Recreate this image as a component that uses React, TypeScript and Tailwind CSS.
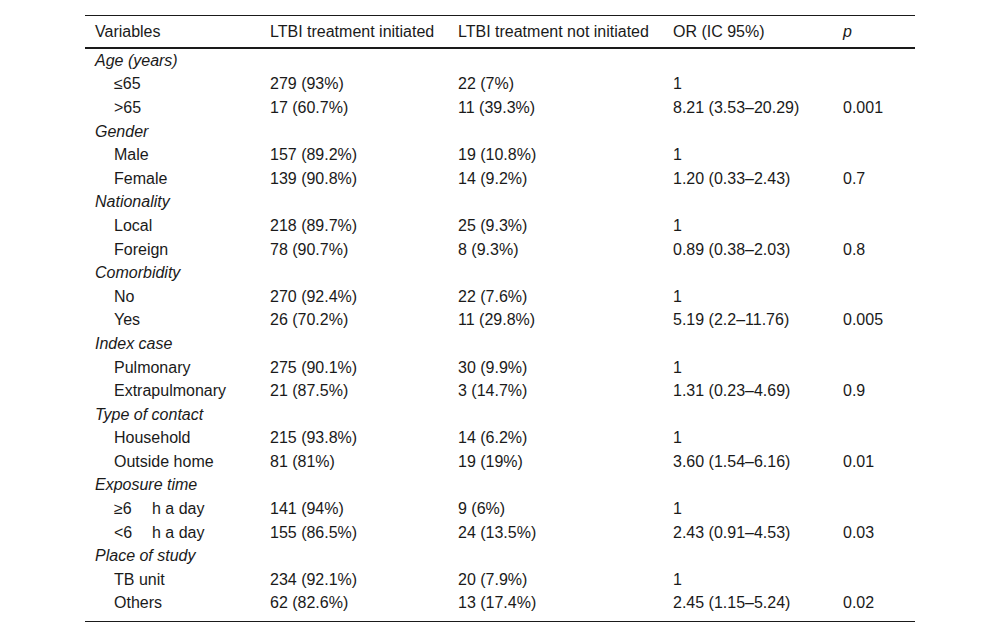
type Row = { label: string; a: string; b: string; or: string; p: string; hours?: boolean };
type Group = { title: string; rows: Row[] };

const groups: Group[] = [
  {
    title: 'Age (years)',
    rows: [
      { label: '≤65', a: '279 (93%)', b: '22 (7%)', or: '1', p: '' },
      { label: '>65', a: '17 (60.7%)', b: '11 (39.3%)', or: '8.21 (3.53–20.29)', p: '0.001' },
    ],
  },
  {
    title: 'Gender',
    rows: [
      { label: 'Male', a: '157 (89.2%)', b: '19 (10.8%)', or: '1', p: '' },
      { label: 'Female', a: '139 (90.8%)', b: '14 (9.2%)', or: '1.20 (0.33–2.43)', p: '0.7' },
    ],
  },
  {
    title: 'Nationality',
    rows: [
      { label: 'Local', a: '218 (89.7%)', b: '25 (9.3%)', or: '1', p: '' },
      { label: 'Foreign', a: '78 (90.7%)', b: '8 (9.3%)', or: '0.89 (0.38–2.03)', p: '0.8' },
    ],
  },
  {
    title: 'Comorbidity',
    rows: [
      { label: 'No', a: '270 (92.4%)', b: '22 (7.6%)', or: '1', p: '' },
      { label: 'Yes', a: '26 (70.2%)', b: '11 (29.8%)', or: '5.19 (2.2–11.76)', p: '0.005' },
    ],
  },
  {
    title: 'Index case',
    rows: [
      { label: 'Pulmonary', a: '275 (90.1%)', b: '30 (9.9%)', or: '1', p: '' },
      { label: 'Extrapulmonary', a: '21 (87.5%)', b: '3 (14.7%)', or: '1.31 (0.23–4.69)', p: '0.9' },
    ],
  },
  {
    title: 'Type of contact',
    rows: [
      { label: 'Household', a: '215 (93.8%)', b: '14 (6.2%)', or: '1', p: '' },
      { label: 'Outside home', a: '81 (81%)', b: '19 (19%)', or: '3.60 (1.54–6.16)', p: '0.01' },
    ],
  },
  {
    title: 'Exposure time',
    rows: [
      { label: '≥6', hours: true, a: '141 (94%)', b: '9 (6%)', or: '1', p: '' },
      { label: '<6', hours: true, a: '155 (86.5%)', b: '24 (13.5%)', or: '2.43 (0.91–4.53)', p: '0.03' },
    ],
  },
  {
    title: 'Place of study',
    rows: [
      { label: 'TB unit', a: '234 (92.1%)', b: '20 (7.9%)', or: '1', p: '' },
      { label: 'Others', a: '62 (82.6%)', b: '13 (17.4%)', or: '2.45 (1.15–5.24)', p: '0.02' },
    ],
  },
];

const grid = 'grid grid-cols-[175px_188px_215px_170px_82px]';

export default function App() {
  return (
    <div className="min-h-[636px] bg-white pt-[15px] pl-[85px] text-[16px] leading-[18px] text-[#1a1a1a] font-['Liberation_Sans',Arial,sans-serif]">
      <div className="w-[830px] border-t border-b border-[#1a1a1a] pb-[6px]">
        {/* Header */}
        <div className={`${grid} h-[33px] items-center border-b-2 border-[#1a1a1a]`}>
          <div className="pl-[10px]">Variables</div>
          <div className="pl-[10px]">LTBI treatment initiated</div>
          <div className="pl-[10px]">LTBI treatment not initiated</div>
          <div className="pl-[10px]">OR (IC 95%)</div>
          <div className="pl-[10px] italic">p</div>
        </div>

        {/* Body */}
        {groups.map((g) => (
          <div key={g.title}>
            <div className="h-[23.6px] flex items-center pl-[10px] italic">{g.title}</div>
            {g.rows.map((r) => (
              <div key={r.label} className={`${grid} h-[23.6px] items-center`}>
                <div className="pl-[29px] flex">
                  {r.hours ? (
                    <>
                      <span className="w-[38px]">{r.label}</span>
                      <span>h a day</span>
                    </>
                  ) : (
                    r.label
                  )}
                </div>
                <div className="pl-[10px]">{r.a}</div>
                <div className="pl-[10px]">{r.b}</div>
                <div className="pl-[10px]">{r.or}</div>
                <div className="pl-[10px]">{r.p}</div>
              </div>
            ))}
          </div>
        ))}
      </div>
    </div>
  );
}
